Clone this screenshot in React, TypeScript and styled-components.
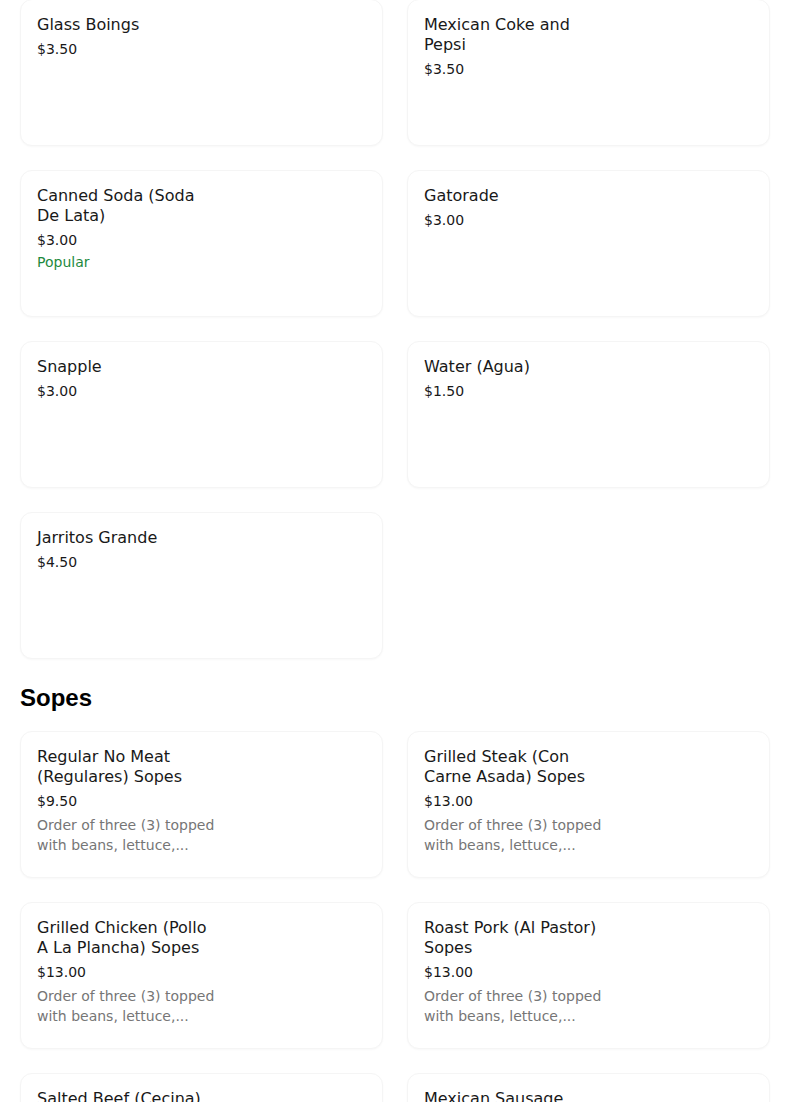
import React from "react";
import styled, { createGlobalStyle } from "styled-components";

type Item = {
  name: string;
  price: string;
  popular?: boolean;
  description?: string;
};

type Section = {
  title?: string;
  items: Item[];
};

const sopesDesc = "Order of three (3) topped with beans, lettuce,...";

const sections: Section[] = [
  {
    items: [
      { name: "Glass Boings", price: "$3.50" },
      { name: "Mexican Coke and Pepsi", price: "$3.50" },
      { name: "Canned Soda (Soda De Lata)", price: "$3.00", popular: true },
      { name: "Gatorade", price: "$3.00" },
      { name: "Snapple", price: "$3.00" },
      { name: "Water (Agua)", price: "$1.50" },
      { name: "Jarritos Grande", price: "$4.50" },
    ],
  },
  {
    title: "Sopes",
    items: [
      { name: "Regular No Meat (Regulares) Sopes", price: "$9.50", description: sopesDesc },
      { name: "Grilled Steak (Con Carne Asada) Sopes", price: "$13.00", description: sopesDesc },
      { name: "Grilled Chicken (Pollo A La Plancha) Sopes", price: "$13.00", description: sopesDesc },
      { name: "Roast Pork (Al Pastor) Sopes", price: "$13.00", description: sopesDesc },
      { name: "Salted Beef (Cecina) Sopes", price: "$13.00", description: sopesDesc },
      { name: "Mexican Sausage (Chorizo) Sopes", price: "$13.00", description: sopesDesc },
    ],
  },
];

const App = () => {
  return (
    <>
      <GlobalStyle />
      <Page>
        {sections.map((section, i) => (
          <MenuSection key={i}>
            {section.title && <SectionTitle>{section.title}</SectionTitle>}
            <Grid>
              {section.items.map((item) => (
                <Card key={item.name}>
                  <Info>
                    <Name>{item.name}</Name>
                    <Price>{item.price}</Price>
                    {item.popular && <Popular>Popular</Popular>}
                    {item.description && <Description>{item.description}</Description>}
                  </Info>
                </Card>
              ))}
            </Grid>
          </MenuSection>
        ))}
      </Page>
    </>
  );
};

export default App;

const GlobalStyle = createGlobalStyle`
  html, body {
    margin: 0;
    padding: 0;
    background: #ffffff;
    overflow: hidden;
  }
  body {
    font-family: "DejaVu Sans", "Noto Sans", sans-serif;
    color: #191919;
  }
`;

const Page = styled.div`
  width: 750px;
  padding: 0 20px;
  margin-top: -1px;
`;

const MenuSection = styled.section`
  display: flex;
  flex-direction: column;
`;

const SectionTitle = styled.h2`
  margin: 25px 0 19px;
  font-family: "Liberation Sans", Arial, sans-serif;
  font-size: 24px;
  line-height: 28px;
  font-weight: 700;
  color: #000000;
`;

const Grid = styled.div`
  display: grid;
  grid-template-columns: repeat(2, 1fr);
  gap: 24px;
`;

const Card = styled.div`
  box-sizing: border-box;
  height: 147px;
  border: 1px solid #f5f5f5;
  border-radius: 12px;
  box-shadow: 0 1px 2px rgba(0, 0, 0, 0.03);
  padding: 15px 16px;
  background: #ffffff;
  cursor: pointer;
`;

const Info = styled.div`
  width: 180px;
  display: flex;
  flex-direction: column;
`;

const Name = styled.div`
  font-size: 16px;
  line-height: 20px;
  color: #191919;
`;

const Price = styled.div`
  margin-top: 4px;
  font-size: 14px;
  line-height: 20px;
  color: #191919;
`;

const Popular = styled.div`
  margin-top: 2px;
  font-size: 14px;
  line-height: 20px;
  color: #1e8a3e;
`;

const Description = styled.div`
  margin-top: 4px;
  font-size: 14px;
  line-height: 20px;
  color: #767676;
  display: -webkit-box;
  -webkit-line-clamp: 2;
  -webkit-box-orient: vertical;
  overflow: hidden;
`;
